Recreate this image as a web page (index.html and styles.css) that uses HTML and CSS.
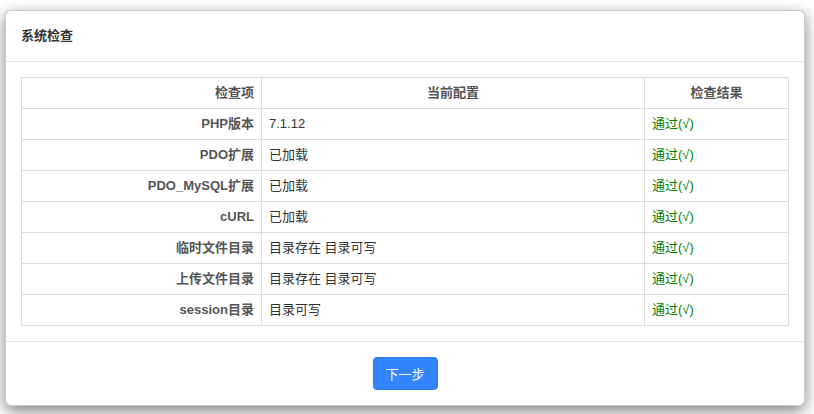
FILE: index.html
```html
<!DOCTYPE html>
<html lang="zh-CN">
<head>
    <meta charset="UTF-8">
    <title>系统检查</title>
    <link rel="stylesheet" href="styles.css">
</head>
<body>
    <div class="modal">
        <div class="modal-header">
            <h4 class="modal-title">系统检查</h4>
        </div>
        <div class="modal-body">
            <table class="check-table">
                <thead>
                    <tr>
                        <th class="col-item">检查项</th>
                        <th class="col-conf">当前配置</th>
                        <th class="col-res">检查结果</th>
                    </tr>
                </thead>
                <tbody>
                    <tr><th>PHP版本</th><td>7.1.12</td><td class="ok">通过(√)</td></tr>
                    <tr><th>PDO扩展</th><td>已加载</td><td class="ok">通过(√)</td></tr>
                    <tr><th>PDO_MySQL扩展</th><td>已加载</td><td class="ok">通过(√)</td></tr>
                    <tr><th>cURL</th><td>已加载</td><td class="ok">通过(√)</td></tr>
                    <tr><th>临时文件目录</th><td>目录存在 目录可写</td><td class="ok">通过(√)</td></tr>
                    <tr><th>上传文件目录</th><td>目录存在 目录可写</td><td class="ok">通过(√)</td></tr>
                    <tr><th>session目录</th><td>目录可写</td><td class="ok">通过(√)</td></tr>
                </tbody>
            </table>
        </div>
        <div class="modal-footer">
            <button class="btn-primary">下一步</button>
        </div>
    </div>
</body>
</html>
```

FILE: styles.css
```css
body {
    margin: 0;
    padding: 10px 9px 10px 5px;
    background: #fff;
    font-family: "Liberation Sans", "Noto Sans CJK SC", sans-serif;
    font-size: 13px;
    line-height: 20px;
    color: #333;
}

.modal {
    width: 798px;
    background: #fff;
    border: 1px solid rgba(0,0,0,0.2);
    border-radius: 6px;
    box-shadow: 0 5px 15px rgba(0,0,0,0.5);
}

.modal-header {
    padding: 15px;
    border-bottom: 1px solid #e5e5e5;
}

.modal-title {
    margin: 0;
    font-size: 13px;
    font-weight: bold;
    line-height: 20px;
    color: #333;
}

.modal-body {
    padding: 15px;
}

.check-table {
    width: 100%;
    border-collapse: collapse;
    border: 1px solid #ddd;
}

.check-table th,
.check-table td {
    padding: 5px 7px;
    border: 1px solid #ddd;
    line-height: 20px;
    text-align: left;
}

.check-table th {
    text-align: right;
    font-weight: bold;
    color: #555;
}

.check-table thead th {
    text-align: center;
}

.check-table thead th.col-item {
    text-align: right;
}

.col-item {
    width: 240px;
    box-sizing: border-box;
}

.col-res {
    width: 144px;
    box-sizing: border-box;
}

.ok {
    color: #008000;
}

.modal-footer {
    padding: 15px;
    text-align: center;
    border-top: 1px solid #e5e5e5;
}

.btn-primary {
    width: 65px;
    height: 33px;
    padding: 0;
    background: #3385ff;
    border: 1px solid #2e78e6;
    border-radius: 4px;
    color: #fff;
    font-family: inherit;
    font-size: 13px;
    cursor: pointer;
}
```
